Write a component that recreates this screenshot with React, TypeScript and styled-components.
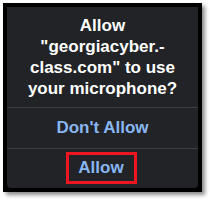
import React from "react";
import styled, { createGlobalStyle } from "styled-components";

const GlobalStyle = createGlobalStyle`
  html, body {
    margin: 0;
    padding: 0;
    background: #ffffff;
  }
  body {
    font-family: "Liberation Sans", Arial, sans-serif;
  }
`;

const Page = styled.div`
  width: 211px;
  height: 200px;
  padding: 3px 0 0 3px;
  box-sizing: border-box;
`;

const Frame = styled.div`
  width: 199px;
  height: 189px;
  box-sizing: border-box;
  border: 4px solid #000000;
  background: #000000;
  box-shadow: 3px 3px 4px rgba(0, 0, 0, 0.45);
`;

const Dialog = styled.div`
  height: 100%;
  background: #222326;
  border-radius: 0 0 4px 4px;
  display: flex;
  flex-direction: column;
`;

const Title = styled.div`
  height: 100px;
  box-sizing: border-box;
  padding: 8px 6px 0;
  color: #ffffff;
  font-size: 17px;
  font-weight: 700;
  line-height: 21px;
  text-align: center;
`;

const Action = styled.div`
  flex: 1;
  display: flex;
  align-items: center;
  justify-content: center;
  border-top: 1px solid #3b3c40;
`;

const ActionLabel = styled.span<{ $highlight?: boolean }>`
  color: #88b6f2;
  font-size: 17px;
  font-weight: 700;
  line-height: 20px;
  box-sizing: border-box;
  ${({ $highlight }) =>
    $highlight &&
    `
    width: 71px;
    height: 32px;
    display: flex;
    align-items: center;
    justify-content: center;
    border: 3px solid #ee1620;
    margin-left: -3px;
  `}
`;

const App = () => {
  return (
    <>
      <GlobalStyle />
      <Page>
        <Frame>
          <Dialog>
            <Title>
              Allow
              <br />
              "georgiacyber.-
              <br />
              class.com" to use
              <br />
              your microphone?
            </Title>
            <Action>
              <ActionLabel>Don't Allow</ActionLabel>
            </Action>
            <Action>
              <ActionLabel $highlight>Allow</ActionLabel>
            </Action>
          </Dialog>
        </Frame>
      </Page>
    </>
  );
};

export default App;
